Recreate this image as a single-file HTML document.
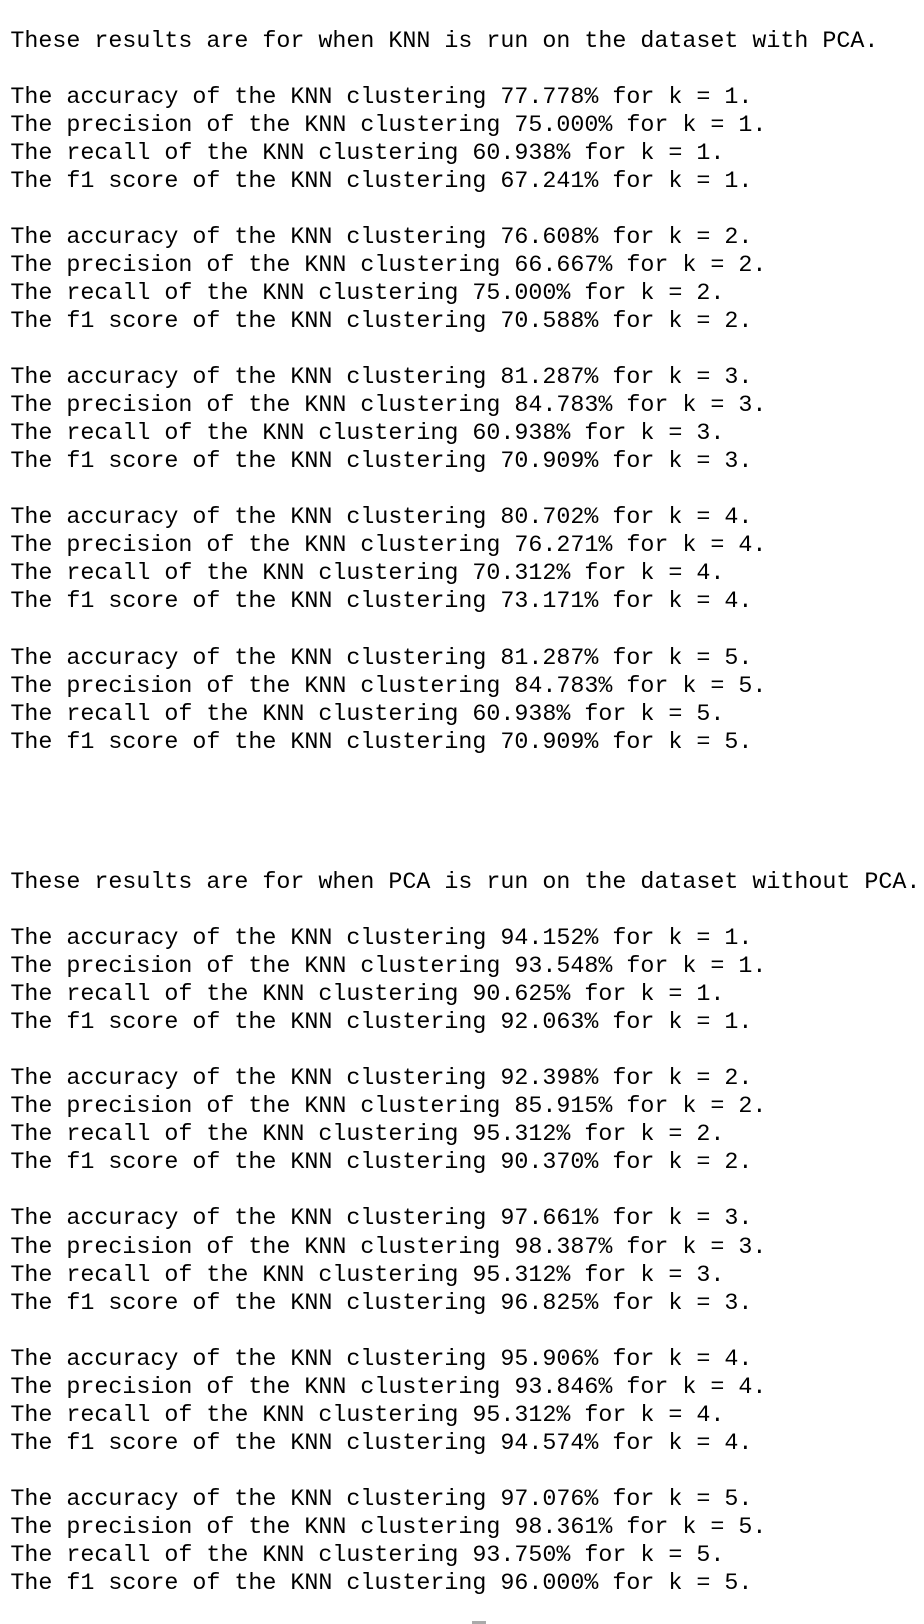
<!DOCTYPE html>
<html><head><meta charset="utf-8"><style>
html,body{margin:0;padding:0;background:#fff;width:924px;height:1624px;overflow:hidden}
pre{margin:0;position:absolute;left:10.4px;top:27.5px;font-family:"Liberation Mono",monospace;font-size:23.33px;line-height:28.04px;color:#000}
.sq{position:absolute;left:490px;top:1684px;width:14px;height:3px;background:#aaa}
</style></head><body>
<pre>These results are for when KNN is run on the dataset with PCA.

The accuracy of the KNN clustering 77.778% for k = 1.
The precision of the KNN clustering 75.000% for k = 1.
The recall of the KNN clustering 60.938% for k = 1.
The f1 score of the KNN clustering 67.241% for k = 1.

The accuracy of the KNN clustering 76.608% for k = 2.
The precision of the KNN clustering 66.667% for k = 2.
The recall of the KNN clustering 75.000% for k = 2.
The f1 score of the KNN clustering 70.588% for k = 2.

The accuracy of the KNN clustering 81.287% for k = 3.
The precision of the KNN clustering 84.783% for k = 3.
The recall of the KNN clustering 60.938% for k = 3.
The f1 score of the KNN clustering 70.909% for k = 3.

The accuracy of the KNN clustering 80.702% for k = 4.
The precision of the KNN clustering 76.271% for k = 4.
The recall of the KNN clustering 70.312% for k = 4.
The f1 score of the KNN clustering 73.171% for k = 4.

The accuracy of the KNN clustering 81.287% for k = 5.
The precision of the KNN clustering 84.783% for k = 5.
The recall of the KNN clustering 60.938% for k = 5.
The f1 score of the KNN clustering 70.909% for k = 5.




These results are for when PCA is run on the dataset without PCA.

The accuracy of the KNN clustering 94.152% for k = 1.
The precision of the KNN clustering 93.548% for k = 1.
The recall of the KNN clustering 90.625% for k = 1.
The f1 score of the KNN clustering 92.063% for k = 1.

The accuracy of the KNN clustering 92.398% for k = 2.
The precision of the KNN clustering 85.915% for k = 2.
The recall of the KNN clustering 95.312% for k = 2.
The f1 score of the KNN clustering 90.370% for k = 2.

The accuracy of the KNN clustering 97.661% for k = 3.
The precision of the KNN clustering 98.387% for k = 3.
The recall of the KNN clustering 95.312% for k = 3.
The f1 score of the KNN clustering 96.825% for k = 3.

The accuracy of the KNN clustering 95.906% for k = 4.
The precision of the KNN clustering 93.846% for k = 4.
The recall of the KNN clustering 95.312% for k = 4.
The f1 score of the KNN clustering 94.574% for k = 4.

The accuracy of the KNN clustering 97.076% for k = 5.
The precision of the KNN clustering 98.361% for k = 5.
The recall of the KNN clustering 93.750% for k = 5.
The f1 score of the KNN clustering 96.000% for k = 5.</pre>
<div class="sq" style="left:472px;top:1621px"></div>
</body></html>
